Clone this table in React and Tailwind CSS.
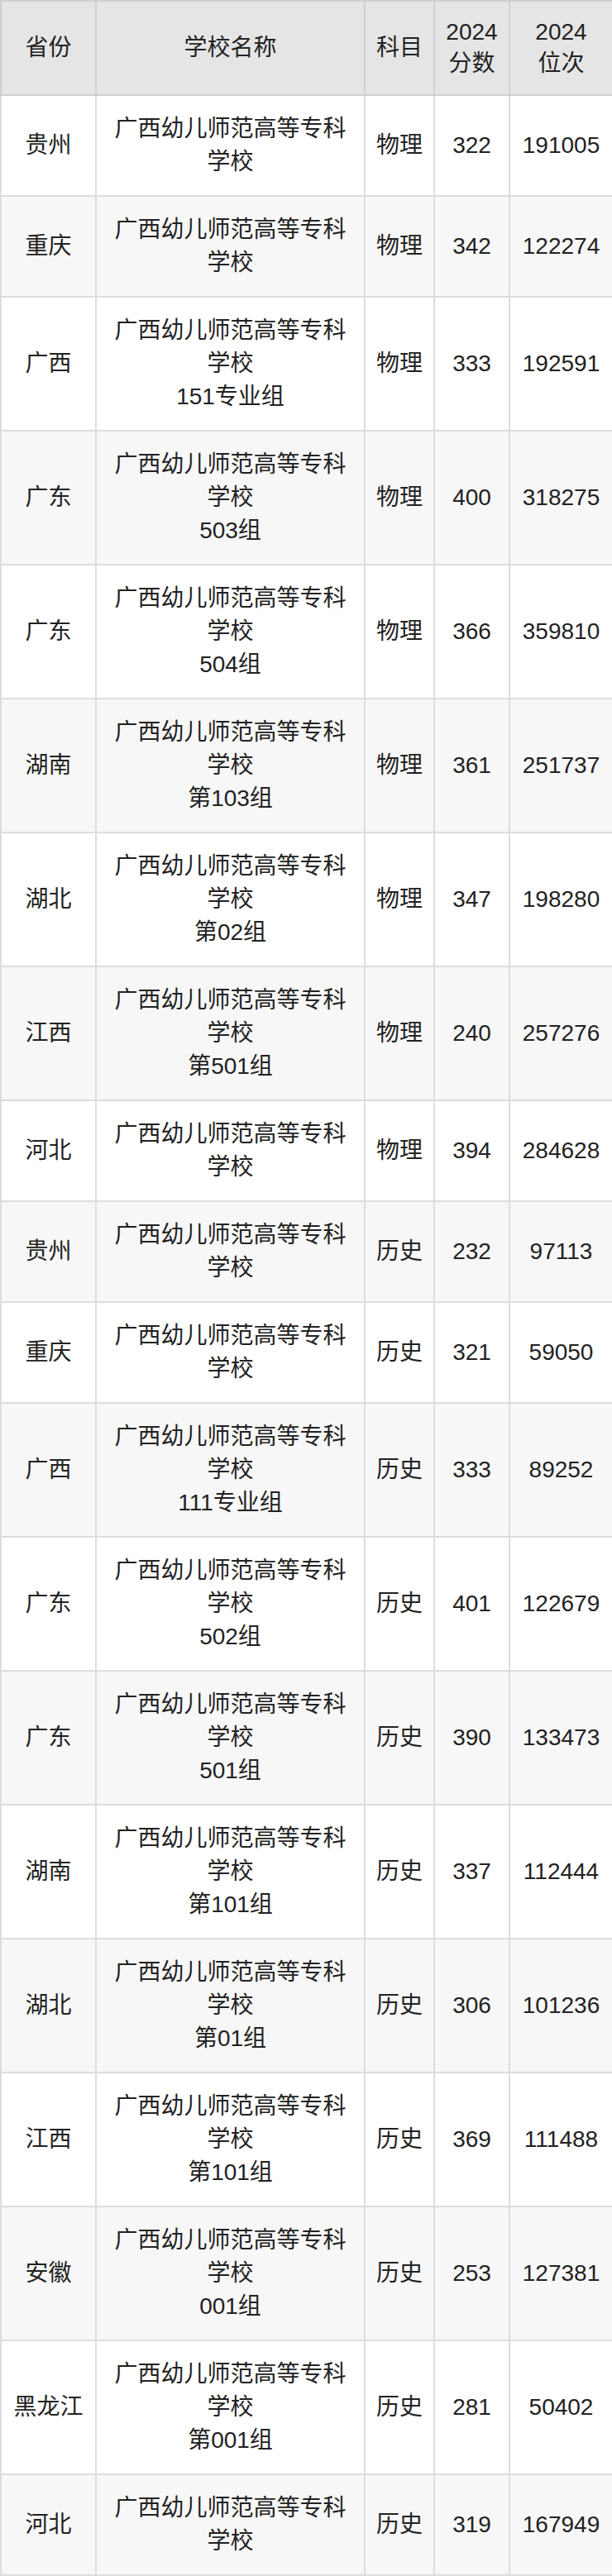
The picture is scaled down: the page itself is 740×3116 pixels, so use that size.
import React from "react"

const rows = [
  ["贵州", "", "物理", "322", "191005"],
  ["重庆", "", "物理", "342", "122274"],
  ["广西", "151专业组", "物理", "333", "192591"],
  ["广东", "503组", "物理", "400", "318275"],
  ["广东", "504组", "物理", "366", "359810"],
  ["湖南", "第103组", "物理", "361", "251737"],
  ["湖北", "第02组", "物理", "347", "198280"],
  ["江西", "第501组", "物理", "240", "257276"],
  ["河北", "", "物理", "394", "284628"],
  ["贵州", "", "历史", "232", "97113"],
  ["重庆", "", "历史", "321", "59050"],
  ["广西", "111专业组", "历史", "333", "89252"],
  ["广东", "502组", "历史", "401", "122679"],
  ["广东", "501组", "历史", "390", "133473"],
  ["湖南", "第101组", "历史", "337", "112444"],
  ["湖北", "第01组", "历史", "306", "101236"],
  ["江西", "第101组", "历史", "369", "111488"],
  ["安徽", "001组", "历史", "253", "127381"],
  ["黑龙江", "第001组", "历史", "281", "50402"],
  ["河北", "", "历史", "319", "167949"],
]

const th = "border-2 border-[#cfcfcf] bg-[#e5e5e5] px-[6px] py-[18px] font-normal leading-[38px] align-middle"
const td = "border-2 border-[#dddddd] px-[6px] py-[20px] leading-[40px] align-middle"

export default function App() {
  return (
    <div
      className="w-[740px] text-[28px] text-[#222222]"
      style={{ fontFamily: '"Liberation Sans", "Noto Sans CJK SC", sans-serif' }}
    >
      <table className="w-[740px] table-fixed border-collapse text-center">
        <colgroup>
          <col className="w-[115px]" />
          <col className="w-[325px]" />
          <col className="w-[84px]" />
          <col className="w-[91px]" />
          <col className="w-[125px]" />
        </colgroup>
        <thead>
          <tr>
            <th className={th}>省份</th>
            <th className={th}>学校名称</th>
            <th className={th}>科目</th>
            <th className={th}>
              2024
              <br />
              分数
            </th>
            <th className={th}>
              2024
              <br />
              位次
            </th>
          </tr>
        </thead>
        <tbody>
          {rows.map((r, i) => (
            <tr key={i} className={i % 2 === 0 ? "bg-white" : "bg-[#f7f7f7]"}>
              <td className={td}>{r[0]}</td>
              <td className={`${td} px-[12px]`}>
                广西幼儿师范高等专科学校
                {r[1] && <div>{r[1]}</div>}
              </td>
              <td className={td}>{r[2]}</td>
              <td className={td}>{r[3]}</td>
              <td className={td}>{r[4]}</td>
            </tr>
          ))}
        </tbody>
      </table>
    </div>
  )
}
